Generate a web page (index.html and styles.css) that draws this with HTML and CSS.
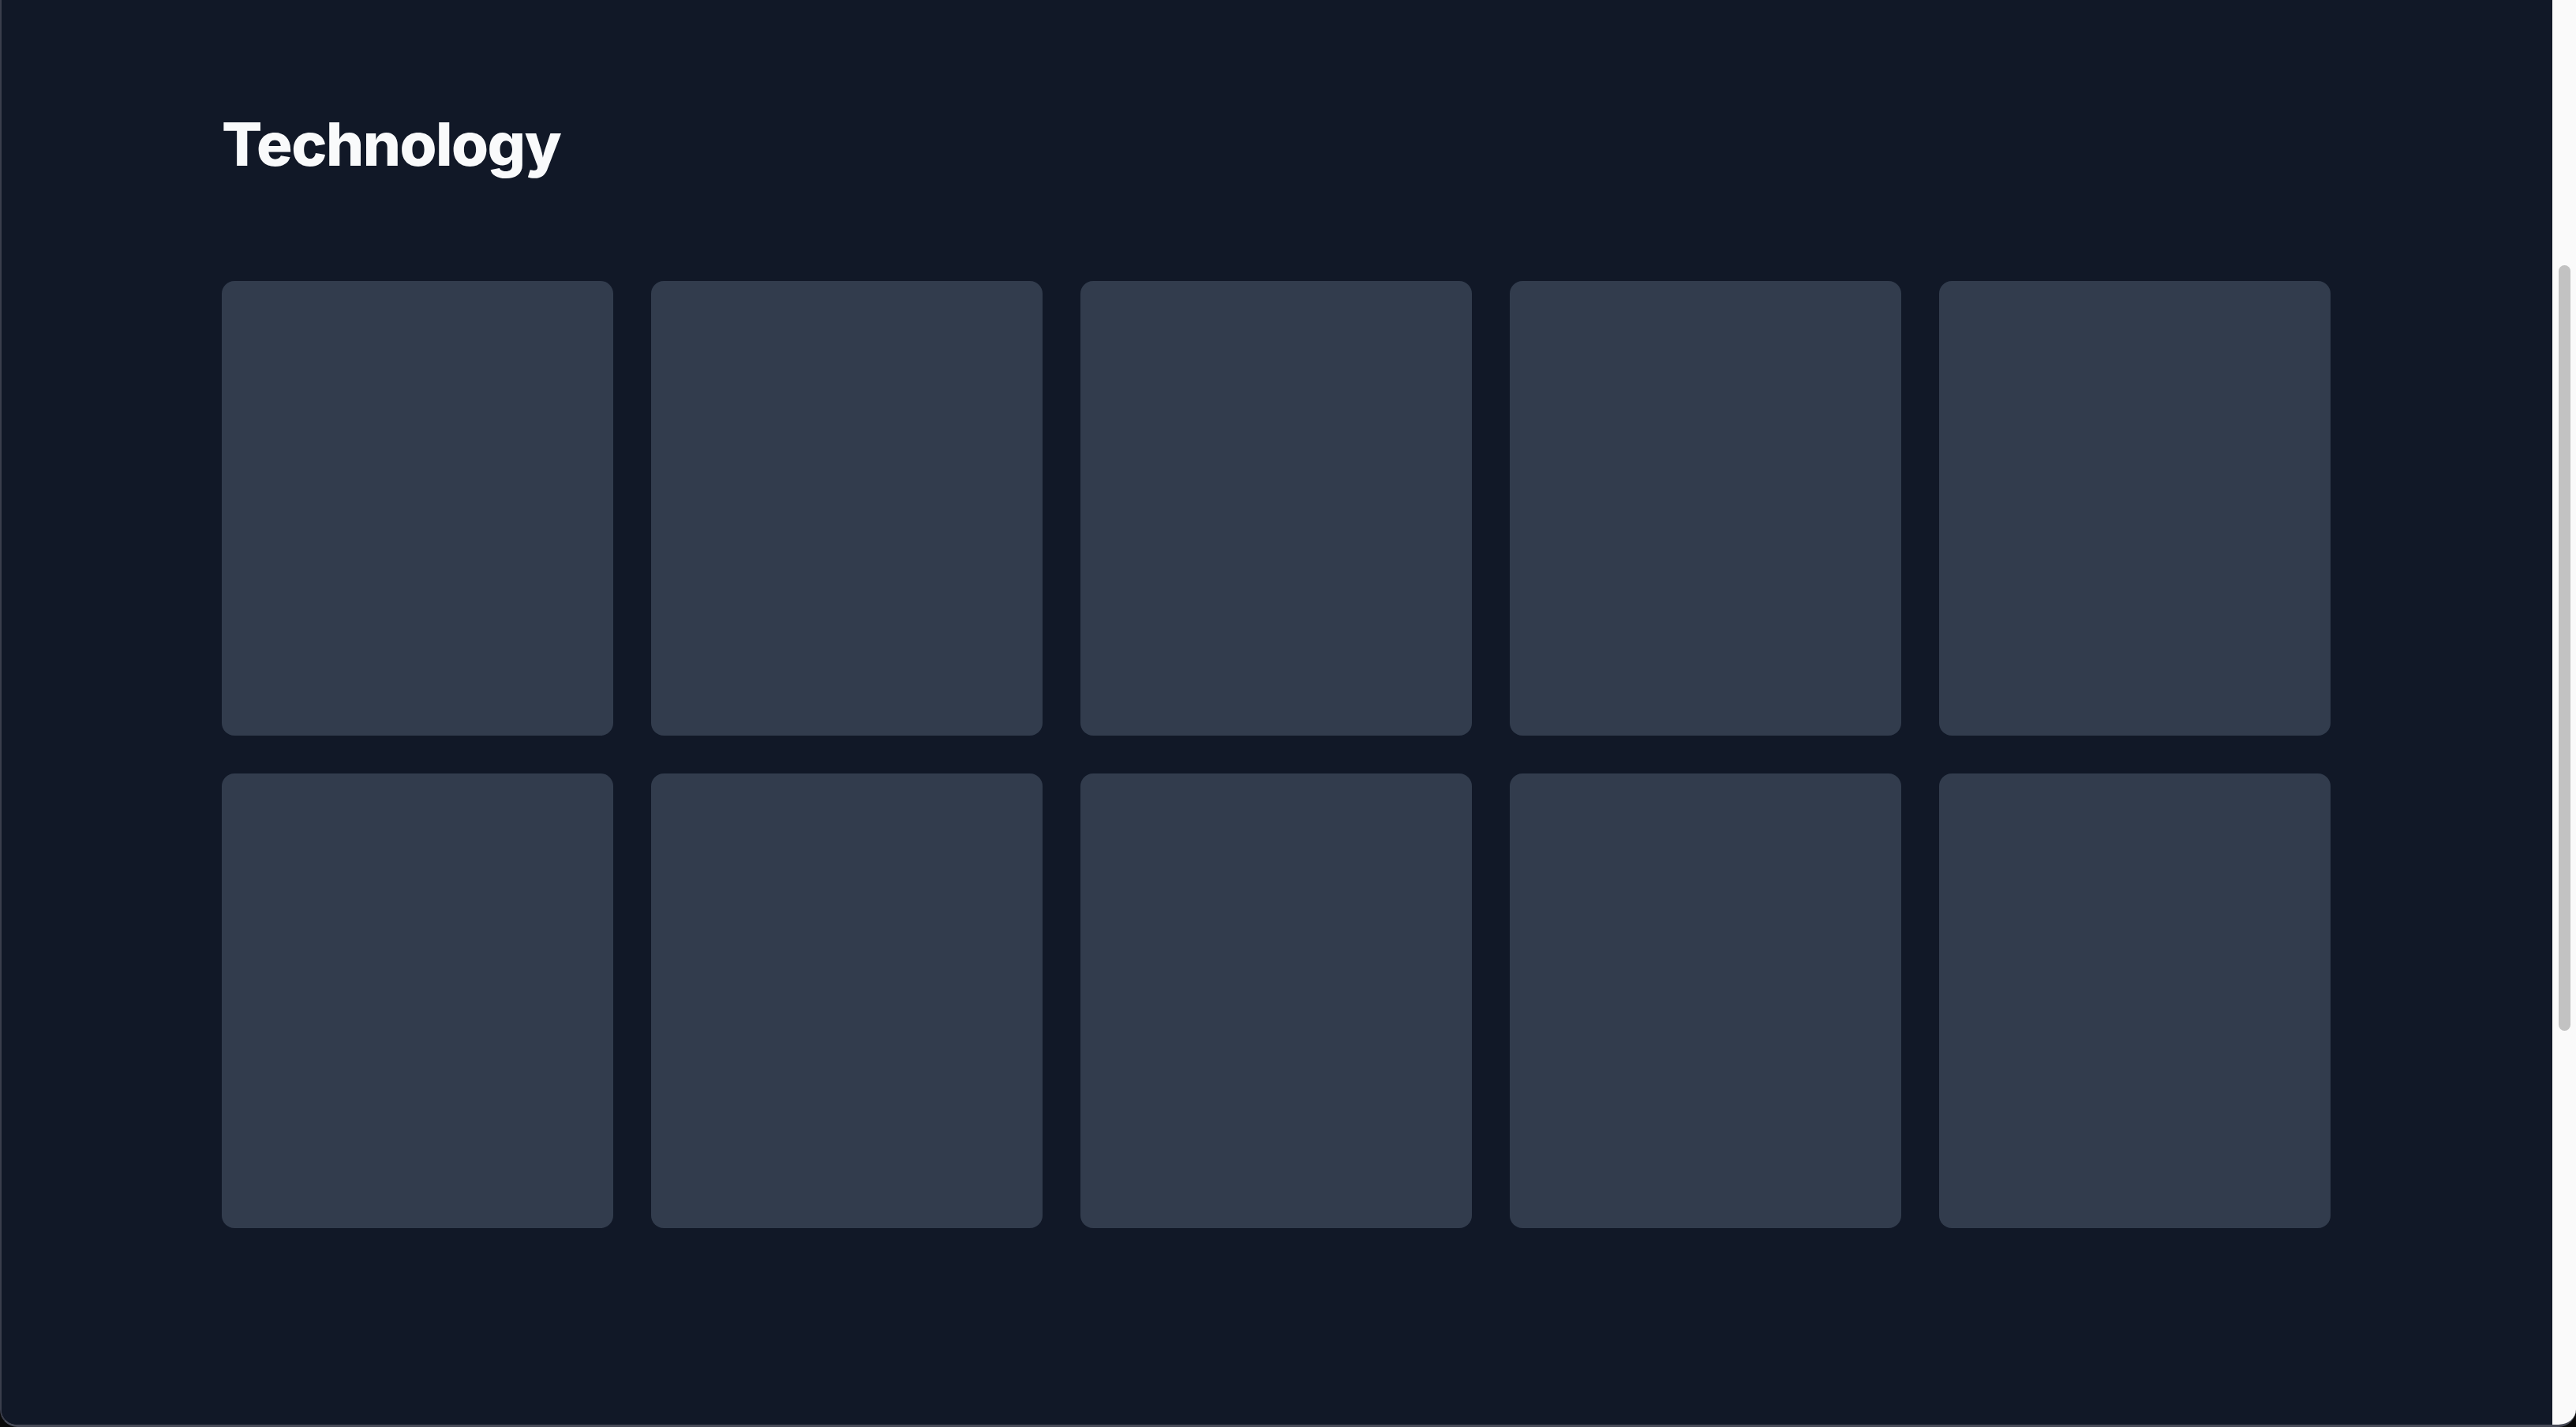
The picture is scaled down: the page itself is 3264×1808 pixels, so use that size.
FILE: index.html
```html
<!DOCTYPE html>
<html lang="en">
<head>
<meta charset="utf-8">
<title>Technology</title>
<link rel="stylesheet" href="styles.css">
</head>
<body>
<div class="window">
  <main class="page">
    <h1 class="title">Technology</h1>
    <div class="grid">
      <div class="card"></div>
      <div class="card"></div>
      <div class="card"></div>
      <div class="card"></div>
      <div class="card"></div>
      <div class="card"></div>
      <div class="card"></div>
      <div class="card"></div>
      <div class="card"></div>
      <div class="card"></div>
    </div>
  </main>
  <div class="scrollbar"><div class="thumb"></div></div>
</div>
</body>
</html>
```

FILE: styles.css
```css
html, body {
  margin: 0;
  padding: 0;
  background: #0a0a0a;
  overflow: hidden;
}
.window {
  box-sizing: border-box;
  width: 3264px;
  height: 1808px;
  display: flex;
  border-left: 2px solid #3a3e4c;
  border-bottom: 3px solid #474a57;
  border-radius: 0 0 22px 22px;
  overflow: hidden;
}
.page {
  flex: 1;
  background: #111827;
  padding: 144px 0 0 279px;
  box-sizing: border-box;
}
.title {
  margin: 0 0 136px 0;
  font-family: Inter, "Liberation Sans", sans-serif;
  font-weight: 800;
  font-size: 76px;
  line-height: 76px;
  letter-spacing: -1.5px;
  color: #f9fafb;
}
.grid {
  display: grid;
  grid-template-columns: repeat(5, 496px);
  grid-auto-rows: 576px;
  column-gap: 48px;
  row-gap: 48px;
}
.card {
  background: #323c4d;
  border-radius: 16px;
}
.scrollbar {
  width: 30px;
  background: #fafafa;
  padding-top: 336px;
  box-sizing: border-box;
}
.thumb {
  width: 15px;
  height: 970px;
  margin-left: 8px;
  border-radius: 8px;
  background: #c2c2c2;
}
```
